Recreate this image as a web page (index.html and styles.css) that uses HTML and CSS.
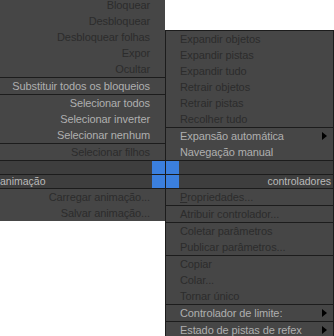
FILE: index.html
```html
<!DOCTYPE html>
<html>
<head>
<meta charset="utf-8">
<link rel="stylesheet" href="styles.css">
</head>
<body>
<div class="quad">
  <div class="col left">
    <div class="item off">Bloquear</div>
    <div class="item off">Desbloquear</div>
    <div class="item off">Desbloquear folhas</div>
    <div class="item off">Expor</div>
    <div class="item off">Ocultar</div>
    <div class="sep"></div>
    <div class="item">Substituir todos os bloqueios</div>
    <div class="sep"></div>
    <div class="item">Selecionar todos</div>
    <div class="item">Selecionar inverter</div>
    <div class="item">Selecionar nenhum</div>
    <div class="sep"></div>
    <div class="item off">Selecionar filhos</div>
    <div class="sep"></div>
    <div class="bar"><span class="title"></span><span class="blue"></span></div>
    <div class="sep"></div>
    <div class="bar"><span class="title">animação</span><span class="blue"></span></div>
    <div class="sep"></div>
    <div class="item off">Carregar animação...</div>
    <div class="item off">Salvar animação...</div>
  </div>
  <div class="col right">
    <div class="item off">Expandir objetos</div>
    <div class="item off">Expandir pistas</div>
    <div class="item off">Expandir tudo</div>
    <div class="item off">Retrair objetos</div>
    <div class="item off">Retrair pistas</div>
    <div class="item off">Recolher tudo</div>
    <div class="sep"></div>
    <div class="item">Expansão automática<span class="arrow"></span></div>
    <div class="item">Navegação manual</div>
    <div class="sep"></div>
    <div class="bar"><span class="blue"></span><span class="title"></span></div>
    <div class="sep"></div>
    <div class="bar"><span class="blue"></span><span class="title">controladores</span></div>
    <div class="sep"></div>
    <div class="item off"><span><u>P</u>ropriedades...</span></div>
    <div class="sep"></div>
    <div class="item off">Atribuir controlador...</div>
    <div class="sep"></div>
    <div class="item off">Coletar parâmetros</div>
    <div class="item off">Publicar parâmetros...</div>
    <div class="sep"></div>
    <div class="item off">Copiar</div>
    <div class="item off">Colar...</div>
    <div class="item off">Tornar único</div>
    <div class="sep"></div>
    <div class="item">Controlador de limite:<span class="arrow"></span></div>
    <div class="sep"></div>
    <div class="item">Estado de pistas de refex<span class="arrow"></span></div>
  </div>
</div>
</body>
</html>
```
FILE: styles.css
```css
html, body {
  margin: 0;
  padding: 0;
  background: #ffffff;
}
body {
  width: 334px;
  height: 336px;
  overflow: hidden;
  font-family: "Liberation Sans", Arial, sans-serif;
  font-size: 11px;
}
.quad {
  display: flex;
  align-items: flex-start;
}
.col {
  display: flex;
  flex-direction: column;
  background: #464646;
}
.left {
  width: 165px;
  margin-top: -3px;
}
.right {
  width: 167px;
  margin-top: 30px;
  border: 1px solid #1c1c1c;
  border-bottom: none;
}
.item {
  height: 16px;
  line-height: 16px;
  color: #afafaf;
  letter-spacing: -0.1px;
  white-space: nowrap;
  display: flex;
  align-items: center;
}
.item.off {
  color: #2c2c2c;
}
.left .item {
  justify-content: flex-end;
  padding-right: 15px;
}
.right .item {
  padding-left: 14px;
  padding-right: 6px;
}
.sep {
  height: 1px;
  background: #1c1c1c;
}
.bar {
  height: 13px;
  display: flex;
  background: #3e3e3e;
}
.title {
  flex: 1;
  font-size: 10.5px;
  line-height: 13px;
  color: #bababa;
  white-space: nowrap;
}
.right .title {
  text-align: right;
  padding-right: 2px;
}
.blue {
  width: 13px;
  background: #3b7fdd;
}
.arrow {
  margin-left: auto;
  width: 0;
  height: 0;
  border-left: 5px solid #000;
  border-top: 4.5px solid transparent;
  border-bottom: 4.5px solid transparent;
}
```
